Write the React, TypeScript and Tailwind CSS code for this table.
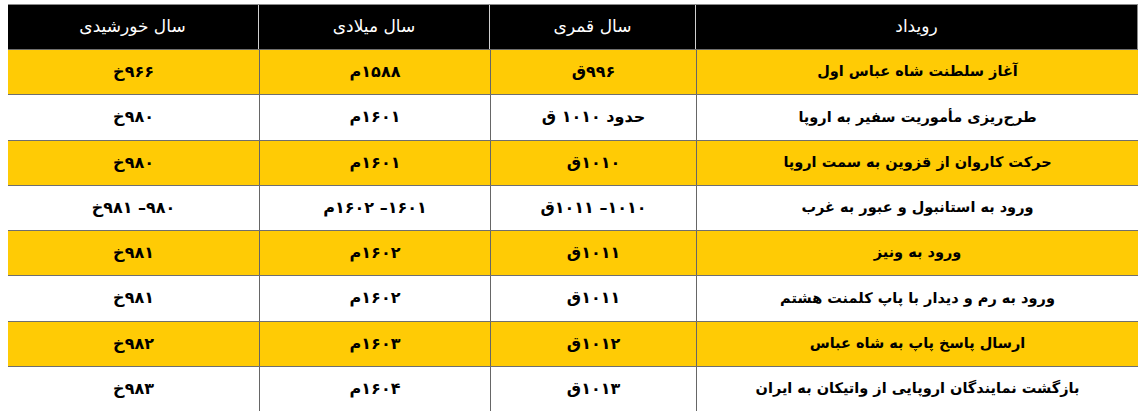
import React from "react";

const rows: [string, string, string, string][] = [
  ["آغاز سلطنت شاه عباس اول", "۹۹۶ق", "۱۵۸۸م", "۹۶۶خ"],
  ["طرح‌ریزی مأموریت سفیر به اروپا", "حدود ۱۰۱۰ ق", "۱۶۰۱م", "۹۸۰خ"],
  ["حرکت کاروان از قزوین به سمت اروپا", "۱۰۱۰ق", "۱۶۰۱م", "۹۸۰خ"],
  ["ورود به استانبول و عبور به غرب", "۱۰۱۰– ۱۰۱۱ق", "۱۶۰۱– ۱۶۰۲م", "۹۸۰– ۹۸۱خ"],
  ["ورود به ونیز", "۱۰۱۱ق", "۱۶۰۲م", "۹۸۱خ"],
  ["ورود به رم و دیدار با پاپ کلمنت هشتم", "۱۰۱۱ق", "۱۶۰۲م", "۹۸۱خ"],
  ["ارسال پاسخ پاپ به شاه عباس", "۱۰۱۲ق", "۱۶۰۳م", "۹۸۲خ"],
  ["بازگشت نمایندگان اروپایی از واتیکان به ایران", "۱۰۱۳ق", "۱۶۰۴م", "۹۸۳خ"],
];

const headers = ["رویداد", "سال قمری", "سال میلادی", "سال خورشیدی"];

export default function App() {
  return (
    <div className="w-[1147px] h-[411px] bg-white overflow-hidden pt-[4px] pl-[8px]">
      <div
        dir="rtl"
        className="w-[1130px] text-black"
        style={{ fontFamily: '"DejaVu Sans", sans-serif' }}
      >
        <div className="grid grid-cols-[442px_206px_231px_251px] h-[45px] bg-black text-white border-t border-r border-[#8a8a8a] text-[17px]">
          {headers.map((h, i) => (
            <div
              key={i}
              className={`flex items-center justify-center ${i < 3 ? "border-l border-[#d0d0d0]" : ""}`}
            >
              {h}
            </div>
          ))}
        </div>
        {rows.map((r, ri) => (
          <div
            key={ri}
            className={`grid grid-cols-[442px_206px_231px_251px] h-[45.25px] border-t border-[#6f6f6f] font-bold ${ri % 2 === 0 ? "bg-[#ffcb05]" : "bg-white"}`}
          >
            {r.map((c, ci) => (
              <div
                key={ci}
                className={`flex items-center justify-center ${ci < 3 ? "border-l border-[#666666]" : ""} ${ci === 0 ? "text-[14.5px]" : "text-[16px]"}`}
              >
                {c}
              </div>
            ))}
          </div>
        ))}
      </div>
    </div>
  );
}
